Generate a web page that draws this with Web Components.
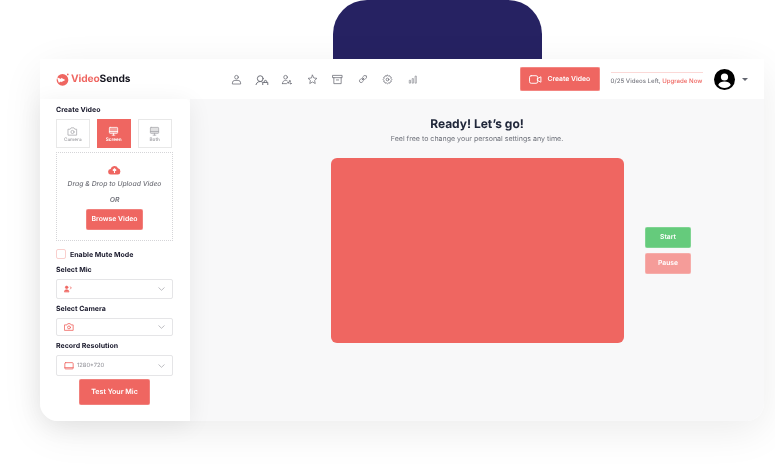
<!DOCTYPE html>
<html lang="en"><head><meta charset="utf-8"><title>VideoSends</title>
<style>
html,body{margin:0;padding:0;background:#fff}
body{width:775px;height:465px;overflow:hidden;font-family:Inter,"Liberation Sans",sans-serif;text-rendering:geometricPrecision}
</style></head><body>
<vs-app></vs-app>
<script>
const def=(name,css,html)=>customElements.define(name,class extends HTMLElement{
  constructor(){super();this.attachShadow({mode:'open'}).innerHTML=`<style>${css}</style>${html(this)}`}
});
const S=(p,w=11,h=11,vb='0 0 24 24',extra='')=>`<svg width="${w}" height="${h}" viewBox="${vb}" fill="none" stroke="currentColor" stroke-width="1.7" stroke-linecap="round" stroke-linejoin="round" ${extra}>${p}</svg>`;

def('vs-nav',`:host{display:flex;align-items:center;gap:0;color:#6d6f78}
span{display:flex;width:25.200px;justify-content:center}`,()=>`
<span>${S('<circle cx="12" cy="7" r="4"/><path d="M3 21v-1.500A5.500 5.500 0 0 1 8.500 14h7a5.500 5.500 0 0 1 5.500 5.500V21z" fill="none"/>')}</span>
<span>${S('<circle cx="9" cy="8" r="5"/><path d="M1.500 20c0-4 3-7 7.500-7 1.500 0 2.500.3 3.500 1M1.500 20h11"/><path d="M14 14.500h8V20h-8zM16 14.500v-1.500a2 2 0 0 1 4 0v1.500"/>',14,11,'0 0 24 19')}</span>
<span>${S('<circle cx="10" cy="7" r="4"/><path d="M3 21c0-4 3-7 7-7 1.500 0 2.500.3 3.500.9M3 21h9"/><circle cx="19" cy="15.500" r="1.300"/><circle cx="15.500" cy="19" r="1.300"/><circle cx="21" cy="20.500" r="1.300"/>')}</span>
<span>${S('<path d="M12 2.500l2.900 6.200 6.700.8-5 4.600 1.400 6.700L12 17.400l-6 3.400 1.400-6.700-5-4.600 6.700-.8z"/>')}</span>
<span>${S('<rect x="2" y="3" width="20" height="5"/><path d="M4 8v13h16V8M9.500 13h5"/>')}</span>
<span>${S('<g transform="rotate(45 12 12)"><rect x="8" y="1.500" width="8" height="10" rx="4"/><rect x="8" y="12.500" width="8" height="10" rx="4"/><path d="M12 9v6"/></g>',10,10)}</span>
<span>${S('<circle cx="12" cy="12" r="3"/><path d="M12 2.500l2 1.800 2.800-.5 1 2.500 2.500 1-.5 2.800 1.700 2-1.700 2 .5 2.400-2.500 1-1 2.500-2.800-.4-2 1.700-2-1.700-2.800.4-1-2.500-2.500-1 .5-2.400-1.700-2 1.700-2-.5-2.800 2.500-1 1-2.500 2.800.5z"/>')}</span>
<span>${S('<path d="M3 21v-6h3v6zM10 21V11h3v10zM17 21V5h3v16z" stroke-width="1.300"/>',10,10)}</span>`);

def('vs-logo',`:host{display:flex;align-items:center;gap:2px;font:700 10.200px/1 Inter,"Liberation Sans",sans-serif;letter-spacing:-.1px;color:#15151f}
b{color:#ef6661;font-weight:700}`,()=>`
<svg width="13" height="13" viewBox="0 0 14 14"><circle cx="7" cy="7.500" r="6.300" fill="#ef6661"/><path d="M1 4.500L8 7.500 3 10.500" fill="#fff"/><path d="M5.500 5l4.500 2.500L5.500 10z" fill="#fff"/><circle cx="12.700" cy="1.500" r=".9" fill="#ef6661"/></svg>
<span><b>Video</b>Sends</span>`);

def('vs-quota',`:host{display:block;margin-left:11px;width:92px;font:500 6.100px/1 Inter,"Liberation Sans",sans-serif;color:#7b7c84;white-space:nowrap}
i{display:block;height:1px;background:#fbd9d7;margin-bottom:6px}
a{color:#ef6661}`,()=>`<i></i>0/25 Videos Left, <a>Upgrade Now</a>`);

def('vs-header',`:host{display:flex;align-items:center;height:40px;padding-left:16px;background:#fff;box-sizing:border-box;flex:none}
button{all:unset;box-sizing:border-box;margin-left:94px;width:80px;height:24px;background:#ef6661;border-radius:2px;color:#fff;font:600 6.800px/1 Inter,"Liberation Sans",sans-serif;display:flex;align-items:center;justify-content:center;gap:5.500px;box-shadow:0 0 0 .5px #f7a6a3 inset}
.av{display:block;margin-left:11px}
.c{margin-left:7px;width:0;height:0;border:3px solid transparent;border-top:3.500px solid #62656f;border-bottom:0}
vs-logo{width:170px;flex:none}
`,()=>`<vs-logo></vs-logo><vs-nav style="margin-left:-2px"></vs-nav>
<button>${S('<rect x="1" y="5" width="15" height="14" rx="3"/><path d="M16 10l6-3v10l-6-3z"/>',13,13)}Create Video</button>
<vs-quota></vs-quota>
<svg class="av" width="21" height="21" viewBox="0 0 21 21"><circle cx="10.500" cy="10.500" r="10.500" fill="#000"/><circle cx="10.500" cy="8" r="3.600" fill="#fff"/><path d="M4.200 16c1-2.500 3.500-3.400 6.300-3.400s5.300.9 6.300 3.400a8 8 0 0 1-12.600 0z" fill="#fff"/></svg>
<span class="c"></span>`);

def('vs-tile',`:host{display:flex;flex-direction:column;align-items:center;box-sizing:border-box;width:33.500px;height:29px;border:1px solid #e8e8e8;color:#a9a9ad;font:600 4.700px/1 Inter,"Liberation Sans",sans-serif;padding-top:6px;gap:1px;background:#fff}
:host([on]){background:#ef6661;border-color:#ef6661;color:#fff}
svg{display:block}`,el=>`${el.getAttribute('icon')==='cam'?S('<path d="M3 7h4l2-3h6l2 3h4v13H3z"/><circle cx="12" cy="13" r="3.500"/>',11,11):S('<rect x="3" y="3" width="18" height="13" rx="1.500" fill="currentColor" fill-opacity=".35"/><path d="M3 12h18M9 20h6M12 16v4"/>',11,11)}<slot></slot>`);

def('vs-label',`:host{display:block;font:700 7px/1 Inter,"Liberation Sans",sans-serif;color:#17172a;white-space:nowrap}`,()=>`<slot></slot>`);

def('vs-select',`:host{display:flex;align-items:center;box-sizing:border-box;width:117px;border:1px solid #e5e5e7;border-radius:2px;padding:0 7px 0 7px;color:#9d9da3;font:500 5.700px/1 Inter,"Liberation Sans",sans-serif;background:#fff;gap:3px}
.i{color:#ef6661;display:flex}
.s{flex:1}
`,el=>{const k=el.getAttribute('icon');const ic=k==='mic'?S('<circle cx="8" cy="7" r="4" fill="currentColor"/><path d="M1 20c0-4 3-6 7-6s7 2 7 6z" fill="currentColor"/><path d="M19 5c1.500 2 1.500 5 0 7M22 8v1"/>',8,8):k==='cam'?S('<path d="M2 7h5l2-3h6l2 3h5v13H2z" stroke-width="2"/><circle cx="12" cy="13" r="3.500" stroke-width="2"/>',10,10):S('<rect x="2" y="4" width="20" height="15" rx="2" stroke-width="2"/><path d="M2 16h20" stroke-width="2"/>',10,10);
return `<span class="i">${ic}</span><span class="s"><slot></slot></span><svg width="7" height="4" viewBox="0 0 7 4" fill="none" stroke="#b6b6bb" stroke-width=".9"><path d="M.5.500L3.500 3.300 6.500.500"/></svg>`});

def('vs-btn',`:host{display:flex;align-items:center;justify-content:center;box-sizing:border-box;background:var(--bg,#ef6661);color:#fff;border-radius:2px;font:600 var(--fs,6.800px)/1 Inter,"Liberation Sans",sans-serif;box-shadow:0 0 0 .5px rgba(255,255,255,.35) inset}`,()=>`<slot></slot>`);

def('vs-drop',`:host{display:flex;flex-direction:column;align-items:center;box-sizing:border-box;width:117px;height:89px;border:1px dotted #d5d5d8;margin-top:4px;padding-top:11px;color:#6f7078;font:italic 500 6.800px/1 Inter,"Liberation Sans",sans-serif}
p{margin:0}
vs-btn{width:57px;height:21px;margin-top:5px;font-style:normal;--fs:6.900px}
`,()=>`<svg width="13" height="11" viewBox="0 0 13 11" style="display:block"><path d="M3 10.500a2.700 2.700 0 0 1-.4-5.400A3.900 3.900 0 0 1 10 4.300a3.200 3.200 0 0 1 0 6.200z" fill="#ef6661"/><path d="M6.500 9V5.200M4.800 6.500L6.500 4.700 8.200 6.500" stroke="#fff" stroke-width="1.100" fill="none"/></svg>
<p style="margin-top:6px">Drag &amp; Drop to Upload Video</p><p style="margin-top:9px;font-weight:600">OR</p><vs-btn>Browse Video</vs-btn>`);

def('vs-sidebar',`:host{display:block;width:150px;flex:none;box-sizing:border-box;padding:7px 0 0 16px;background:#fff;box-shadow:0 4px 24px rgba(0,0,0,.07);border-radius:0 5px 0 18px;position:relative;z-index:1}
.t{display:flex;gap:7.500px;margin-top:6px}
.m{display:flex;align-items:center;gap:4px;margin-top:8px;height:10px}
.m i{display:block;box-sizing:border-box;width:10px;height:10px;border:1px solid #f9cfcd;border-radius:2px}
vs-btn{width:71px;height:26px;margin:3px 0 0 23px;--fs:7.100px}
`,()=>`<vs-label>Create Video</vs-label>
<div class="t"><vs-tile icon="cam">Camera</vs-tile><vs-tile icon="scr" on>Screen</vs-tile><vs-tile icon="scr">Both</vs-tile></div>
<vs-drop></vs-drop>
<div class="m"><i></i><vs-label>Enable Mute Mode</vs-label></div>
<vs-label style="margin-top:7px">Select Mic</vs-label>
<vs-select icon="mic" style="height:20px;margin-top:6px"></vs-select>
<vs-label style="margin-top:6px">Select Camera</vs-label>
<vs-select icon="cam" style="height:18px;margin-top:6px"></vs-select>
<vs-label style="margin-top:6px">Record Resolution</vs-label>
<vs-select icon="res" style="height:21px;margin-top:6px">1280*720</vs-select>
<vs-btn>Test Your Mic</vs-btn>`);

def('vs-stage',`:host{display:flex;flex:1;flex-direction:column;background:#f8f8f9;border-radius:0 0 18px 0;min-width:0}
.h{text-align:center;padding-top:17px}
h1{margin:0;font:700 12px/15px Inter,"Liberation Sans",sans-serif;color:#20273a}
p{margin:3px 0 0;font:400 7.050px/9px Inter,"Liberation Sans",sans-serif;color:#6d7079}
.r{display:flex;margin:15px 0 0 141px;gap:21px}
.v{width:293px;height:185px;background:#ef6661;border-radius:6px;flex:none}
.b{display:flex;flex-direction:column;gap:5px;padding-top:69px}
vs-btn{width:46px;height:21px}
`,()=>`<div class="h"><h1>Ready! Let’s go!</h1><p>Feel free to change your personal settings any time.</p></div>
<div class="r"><div class="v"></div><div class="b"><vs-btn style="--bg:#65cb7c">Start</vs-btn><vs-btn style="--bg:#f59c99">Pause</vs-btn></div></div>`);

def('vs-app',`:host{display:block;width:775px;height:465px;overflow:hidden}
.tab{width:209px;height:59px;margin-left:333px;background:#262262;border-radius:34px 34px 0 0}
.card{width:724px;height:362px;margin-left:40px;border-radius:18px;background:#fff;box-shadow:0 10px 40px rgba(0,0,0,.08);display:flex;flex-direction:column;position:relative;will-change:transform}
.body{display:flex;flex:1;min-height:0}
`,()=>`<div class="tab"></div><div class="card"><vs-header></vs-header><div class="body"><vs-sidebar></vs-sidebar><vs-stage></vs-stage></div></div>`);
</script></body></html>
